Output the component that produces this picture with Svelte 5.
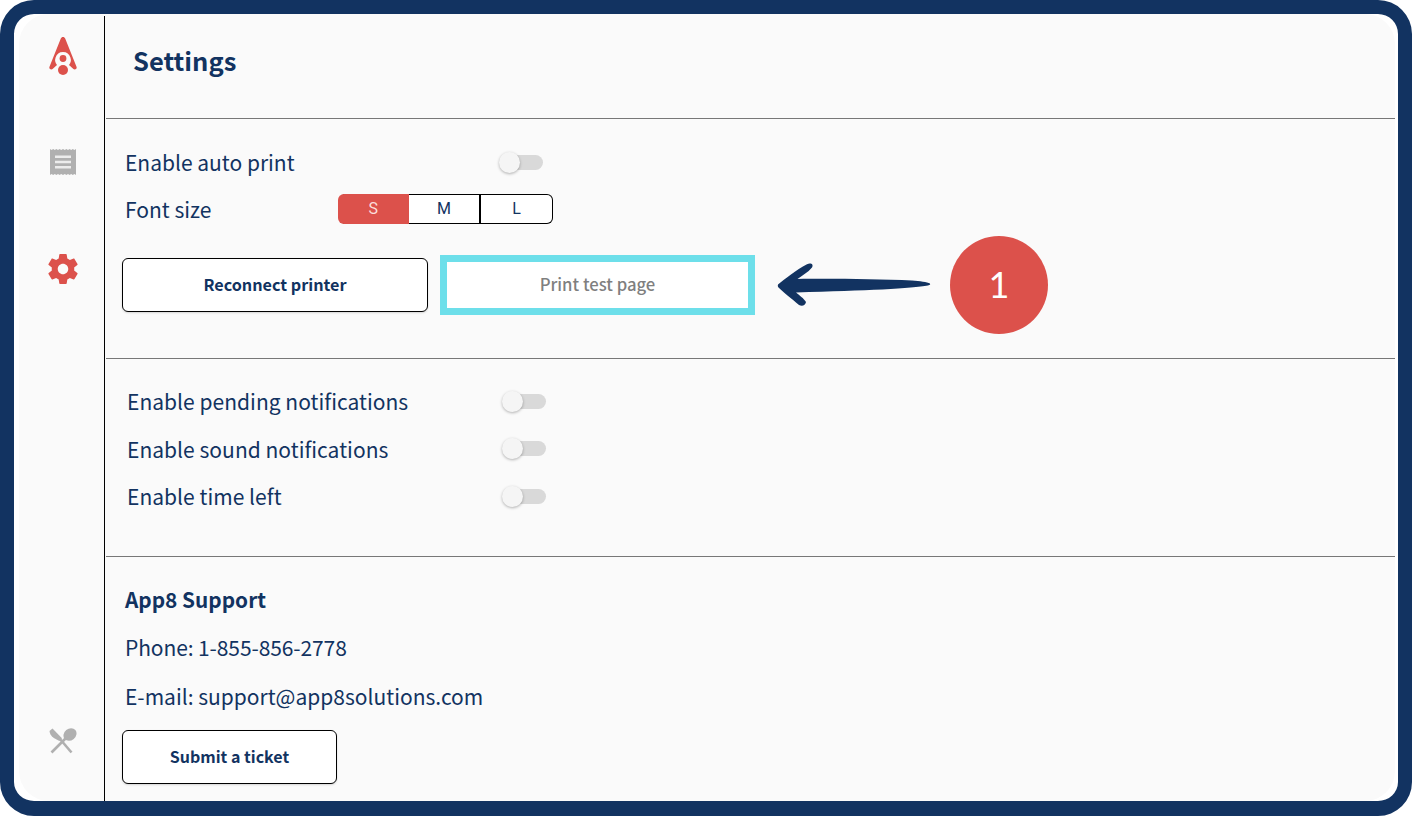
<script>
  const font = ["S", "M", "L"];
  const toggles = ["Enable pending notifications", "Enable sound notifications", "Enable time left"];
</script>

<div class="frame">
  <div class="app">
    <nav class="side">
      <svg class="logo" viewBox="0 0 30 40" width="30" height="40">
        <path fill="#dc514b" fill-rule="evenodd" d="M15 1c1 0 1.800.6 2.300 1.800L28.600 31c.7 1.800-1.800 3.400-3.200 2.100l-4.400-4a8 8 0 0 0 1.400-7.600 7.700 7.700 0 0 0-14.800 0 8 8 0 0 0 1.400 7.600l-4.400 4C3.200 34.400.7 32.800 1.400 31L12.700 2.800C13.200 1.600 14 1 15 1z"/>
        <circle cx="15" cy="22.500" r="3.400" fill="#dc514b"/>
        <circle cx="15" cy="34" r="5" fill="#dc514b"/>
      </svg>
      <svg class="receipt" viewBox="0 0 26 28" width="26" height="28">
        <path fill="#b0b0b0" d="M0 1l1.600 1L3.200 1l1.600 1L6.400 1 8 2l1.600-1 1.600 1 1.800-1 1.800 1 1.600-1L18 2l1.600-1 1.600 1 1.600-1 1.600 1L26 1v26l-1.600-1-1.600 1-1.600-1-1.600 1-1.600-1-1.600 1-1.600-1L13 27l-1.800-1-1.600 1L8 26l-1.600 1-1.600-1-1.600 1-1.600-1L0 27z"/>
        <path fill="#ececec" d="M5 7.500h16v2.400H5zM5 12.800h16v2.400H5zM5 18.100h16v2.400H5z"/>
      </svg>
      <svg class="gear" viewBox="0 0 24 24" width="36" height="36">
        <path fill="#dc514b" d="M19.430 12.980c.04-.32.07-.64.07-.98s-.03-.66-.07-.98l2.110-1.650c.19-.15.24-.42.12-.64l-2-3.460c-.12-.22-.39-.3-.61-.22l-2.490 1c-.52-.4-1.080-.73-1.690-.98l-.38-2.650A.488.488 0 0 0 14 2h-4c-.25 0-.46.18-.49.420l-.38 2.650c-.61.250-1.170.590-1.690.980l-2.490-1c-.23-.09-.49 0-.61.220l-2 3.460c-.13.220-.07.490.12.640l2.110 1.650c-.04.320-.07.650-.07.980s.03.660.07.980l-2.110 1.650c-.19.150-.24.420-.12.640l2 3.460c.12.220.39.300.61.220l2.490-1c.52.400 1.080.730 1.690.980l.38 2.650c.03.240.24.420.49.420h4c.25 0 .46-.18.490-.42l.38-2.650c.61-.25 1.170-.59 1.690-.98l2.490 1c.23.090.49 0 .61-.22l2-3.460c.12-.22.070-.49-.12-.64l-2.110-1.650zM12 15.500c-1.930 0-3.500-1.570-3.500-3.500s1.570-3.500 3.500-3.500 3.500 1.570 3.500 3.500-1.570 3.500-3.500 3.500z"/>
      </svg>
      <svg class="cutlery" viewBox="0 0 28 26" width="28" height="26">
        <path fill="#b0b0b0" d="M.5 3 3.500.5l9.500 9.800-2.600 2.600L4.800 10C2.200 8 .5 5.500.5 3z"/>
        <path stroke="#b0b0b0" stroke-width="2.600" d="M11 11l11.500 13.500"/>
        <path stroke="#b0b0b0" stroke-width="2.600" d="M2.500 24.500 17 10"/>
        <ellipse cx="21" cy="6.500" rx="7" ry="5.800" transform="rotate(-40 21 6.500)" fill="#b0b0b0"/>
      </svg>
    </nav>

    <main>
      <header>
        <h1>Settings</h1>
      </header>

      <section class="printer">
        <div class="row auto">
          <span class="label">Enable auto print</span>
          <span class="toggle"><i></i></span>
        </div>
        <div class="row size">
          <span class="label">Font size</span>
          <div class="segments">
            {#each font as f, i}
              <span class="seg" class:on={i === 0}>{f}</span>
            {/each}
          </div>
        </div>
        <div class="actions">
          <button class="btn reconnect">Reconnect printer</button>
          <button class="btn test">Print test page</button>
          <svg class="arrow" viewBox="0 0 156 46" width="156" height="46">
            <path fill="#123361" d="M1 22.500 C8 17 19 8 30 2.200 C33.500.4 37 2 35 5.500 C31 10.500 25 13.500 20.500 17 C50 16.500 100 17 135 18.500 C143 19 150 20 153 21.500 C153.500 22.500 153 23 151 23.500 C135 26.500 90 28.500 19 30.500 C22 33 27 36.500 29 40 C28.500 43.500 25 44.500 22 43 C15 37 6 30 1.500 25.500 C.7 24.500.7 23.500 1 22.500z"/>
          </svg>
          <span class="step">1</span>
        </div>
      </section>

      <section class="notifs">
        {#each toggles as t}
          <div class="row">
            <span class="label">{t}</span>
            <span class="toggle"><i></i></span>
          </div>
        {/each}
      </section>

      <section class="support">
        <h2>App8 Support</h2>
        <p>Phone: 1-855-856-2778</p>
        <p>E-mail: support@app8solutions.com</p>
        <button class="btn ticket">Submit a ticket</button>
      </section>
    </main>
  </div>
</div>

<style>
  :global(body) {
    margin: 0;
    background: #fff;
  }

  .frame {
    box-sizing: border-box;
    width: 1412px;
    height: 816px;
    padding: 0 3px 0 5px;
    border: 14px solid #123361;
    border-bottom-width: 15px;
    border-radius: 34px;
    background: #fff;
    overflow: hidden;
    font-family: "Noto Sans CJK SC", "Noto Sans", sans-serif;
    color: #123361;
  }

  .app {
    display: flex;
    height: 100%;
    background: #fafafa;
    border-radius: 30px;
    overflow: hidden;
  }

  .side {
    box-sizing: border-box;
    width: 86px;
    flex: none;
    border-right: 1px solid #000;
    position: relative;
    margin-top: 2px;
  }
  .side svg {
    position: absolute;
    left: 43.500px;
    transform: translateX(-50%);
  }
  .logo { top: 20px; }
  .receipt { top: 132px; }
  .gear { top: 235px; }
  .cutlery { top: 712px; }

  main {
    flex: 1;
    min-width: 0;
    padding-left: 1px;
  }

  header {
    box-sizing: border-box;
    height: 105px;
    border-bottom: 1px solid #777;
    padding: 27px 0 0 27px;
  }
  h1 {
    margin: 0;
    font-size: 25.500px;
    line-height: 38px;
    font-weight: 600;
  }

  section {
    border-bottom: 1px solid #777;
    box-sizing: border-box;
  }

  .row {
    display: flex;
    align-items: center;
  }
  .label {
    font-size: 21px;
    line-height: 30px;
    font-weight: 400;
  }

  .printer {
    height: 240px;
    padding: 28px 0 0 19px;
  }
  .printer .label { width: 213px; }
  .printer .auto .label { width: 373px; }
  .size { margin-top: 17px; }

  .toggle {
    position: relative;
    display: block;
    width: 33px;
    height: 15px;
    margin-left: 12px;
    border-radius: 8px;
    background: #d9d9d9;
  }
  .toggle i {
    position: absolute;
    left: -11px;
    top: -3px;
    width: 21px;
    height: 21px;
    border-radius: 50%;
    background: #f5f5f5;
    box-shadow: 0 1px 3px rgba(0, 0, 0, 0.3);
  }

  .segments {
    display: flex;
    width: 215px;
    height: 30px;
  }
  .seg {
    flex: 1;
    box-sizing: border-box;
    text-align: center;
    font: 16px/28px Roboto, sans-serif;
    background: #fff;
    border: 1.500px solid #000;
    border-left-width: 0;
    border-right-width: 2px;
  }
  .seg:last-child {
    border-right-width: 1.500px;
    border-radius: 0 6px 6px 0;
  }
  .seg.on {
    background: #dc514b;
    color: #fbdcda;
    border: 0;
    line-height: 30px;
    border-radius: 6px 0 0 6px;
    box-shadow: 1.500px 0 0 #000;
  }

  .actions {
    display: flex;
    align-items: center;
    margin: 12px 0 0 -3px;
  }
  .btn {
    box-sizing: border-box;
    padding: 0 0 2px;
    font-family: inherit;
    font-size: 16.200px;
    font-weight: 600;
    color: #123361;
    background: #fff;
    border: 1.500px solid #000;
    border-radius: 6px;
    box-shadow: 0 1px 2px rgba(0, 0, 0, 0.15);
  }
  .reconnect {
    width: 306px;
    height: 54px;
  }
  .test {
    width: 315px;
    height: 60px;
    margin-left: 12px;
    border: 7px solid #6ddfea;
    border-radius: 0;
    box-shadow: none;
    font-size: 16.700px;
    font-weight: 500;
    color: #7f7f7f;
  }
  .arrow {
    margin-left: 22px;
    flex: none;
  }
  .step {
    width: 98px;
    height: 98px;
    margin-left: 17px;
    border-radius: 50%;
    background: #dc514b;
    color: #fff;
    font-family: Lato, sans-serif;
    font-size: 36px;
    font-weight: 400;
    line-height: 96px;
    text-align: center;
    flex: none;
  }

  .notifs {
    height: 198px;
    padding: 27px 0 0 21px;
  }
  .notifs .row { height: 30px; margin-bottom: 17.500px; }
  .notifs .label { width: 374px; letter-spacing: 0.03px; }

  .support {
    border: 0;
    padding: 26px 0 0 19px;
  }
  h2 {
    margin: 0;
    font-size: 20.800px;
    line-height: 32px;
    font-weight: 600;
  }
  .support p {
    margin: 17px 0 0;
    font-size: 21px;
    line-height: 32px;
  }
  .support h2 + p {
    margin-top: 16px;
    letter-spacing: -0.1px;
  }
  .ticket {
    display: block;
    width: 215px;
    height: 54px;
    margin: 18px 0 0 -3px;
    font-size: 16px;
  }
</style>
